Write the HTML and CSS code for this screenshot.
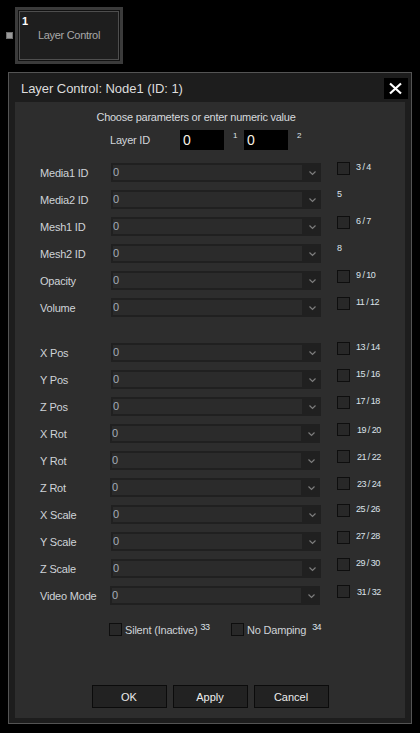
FILE: index.html
```html
<!DOCTYPE html>
<html lang="en">
<head>
<meta charset="utf-8">
<title>Layer Control</title>
<link rel="stylesheet" href="styles.css">
</head>
<body>
<div class="canvas">
  <span class="port"></span>
  <div class="node">
    <div class="node-in">
      <div class="node-id">1</div>
      <div class="node-name">Layer Control</div>
    </div>
  </div>
</div>

<div class="dialog">
  <div class="titlebar">
    <span class="title">Layer Control: Node1 (ID: 1)</span>
    <button class="close" type="button" aria-label="Close">
      <svg width="24" height="21" viewBox="0 0 24 21"><path d="M6 5.5 L17 15.5 M17 5.5 L6 15.5" stroke="#fff" stroke-width="2.2" fill="none"/></svg>
    </button>
  </div>
  <div class="panel">
    <div class="hint">Choose parameters or enter numeric value</div>
    <div class="layer-row">
      <span class="layer-label">Layer ID</span>
      <span class="num-input">0</span><span class="sup">1</span>
      <span class="num-input">0</span><span class="sup">2</span>
    </div>

    <div class="rows">
      <div class="row"><span class="lbl">Media1 ID</span><div class="sel"><span class="val">0</span><span class="btn-dd"><svg width="19" height="19" viewBox="0 0 19 19"><polyline points="7.5,8.5 10.5,11.5 13.5,8.5" fill="none" stroke="#7c7c7c" stroke-width="1.2"/></svg></span></div><span class="cb"></span><span class="idx">3 / 4</span></div>
      <div class="row"><span class="lbl">Media2 ID</span><div class="sel"><span class="val">0</span><span class="btn-dd"><svg width="19" height="19" viewBox="0 0 19 19"><polyline points="7.5,8.5 10.5,11.5 13.5,8.5" fill="none" stroke="#7c7c7c" stroke-width="1.2"/></svg></span></div><span class="idx solo">5</span></div>
      <div class="row"><span class="lbl">Mesh1 ID</span><div class="sel"><span class="val">0</span><span class="btn-dd"><svg width="19" height="19" viewBox="0 0 19 19"><polyline points="7.5,8.5 10.5,11.5 13.5,8.5" fill="none" stroke="#7c7c7c" stroke-width="1.2"/></svg></span></div><span class="cb"></span><span class="idx">6 / 7</span></div>
      <div class="row"><span class="lbl">Mesh2 ID</span><div class="sel"><span class="val">0</span><span class="btn-dd"><svg width="19" height="19" viewBox="0 0 19 19"><polyline points="7.5,8.5 10.5,11.5 13.5,8.5" fill="none" stroke="#7c7c7c" stroke-width="1.2"/></svg></span></div><span class="idx solo">8</span></div>
      <div class="row"><span class="lbl">Opacity</span><div class="sel"><span class="val">0</span><span class="btn-dd"><svg width="19" height="19" viewBox="0 0 19 19"><polyline points="7.5,8.5 10.5,11.5 13.5,8.5" fill="none" stroke="#7c7c7c" stroke-width="1.2"/></svg></span></div><span class="cb"></span><span class="idx">9 / 10</span></div>
      <div class="row"><span class="lbl">Volume</span><div class="sel"><span class="val">0</span><span class="btn-dd"><svg width="19" height="19" viewBox="0 0 19 19"><polyline points="7.5,8.5 10.5,11.5 13.5,8.5" fill="none" stroke="#7c7c7c" stroke-width="1.2"/></svg></span></div><span class="cb"></span><span class="idx">11 / 12</span></div>

      <div class="row group-start"><span class="lbl">X Pos</span><div class="sel"><span class="val">0</span><span class="btn-dd"><svg width="19" height="19" viewBox="0 0 19 19"><polyline points="7.5,8.5 10.5,11.5 13.5,8.5" fill="none" stroke="#7c7c7c" stroke-width="1.2"/></svg></span></div><span class="cb"></span><span class="idx">13 / 14</span></div>
      <div class="row"><span class="lbl">Y Pos</span><div class="sel"><span class="val">0</span><span class="btn-dd"><svg width="19" height="19" viewBox="0 0 19 19"><polyline points="7.5,8.5 10.5,11.5 13.5,8.5" fill="none" stroke="#7c7c7c" stroke-width="1.2"/></svg></span></div><span class="cb"></span><span class="idx">15 / 16</span></div>
      <div class="row"><span class="lbl">Z Pos</span><div class="sel"><span class="val">0</span><span class="btn-dd"><svg width="19" height="19" viewBox="0 0 19 19"><polyline points="7.5,8.5 10.5,11.5 13.5,8.5" fill="none" stroke="#7c7c7c" stroke-width="1.2"/></svg></span></div><span class="cb"></span><span class="idx">17 / 18</span></div>
      <div class="row shift"><span class="lbl">X Rot</span><div class="sel"><span class="val">0</span><span class="btn-dd"><svg width="19" height="19" viewBox="0 0 19 19"><polyline points="7.5,8.5 10.5,11.5 13.5,8.5" fill="none" stroke="#7c7c7c" stroke-width="1.2"/></svg></span></div><span class="cb"></span><span class="idx">19 / 20</span></div>
      <div class="row shift"><span class="lbl">Y Rot</span><div class="sel"><span class="val">0</span><span class="btn-dd"><svg width="19" height="19" viewBox="0 0 19 19"><polyline points="7.5,8.5 10.5,11.5 13.5,8.5" fill="none" stroke="#7c7c7c" stroke-width="1.2"/></svg></span></div><span class="cb"></span><span class="idx">21 / 22</span></div>
      <div class="row shift"><span class="lbl">Z Rot</span><div class="sel"><span class="val">0</span><span class="btn-dd"><svg width="19" height="19" viewBox="0 0 19 19"><polyline points="7.5,8.5 10.5,11.5 13.5,8.5" fill="none" stroke="#7c7c7c" stroke-width="1.2"/></svg></span></div><span class="cb"></span><span class="idx">23 / 24</span></div>
      <div class="row"><span class="lbl">X Scale</span><div class="sel"><span class="val">0</span><span class="btn-dd"><svg width="19" height="19" viewBox="0 0 19 19"><polyline points="7.5,8.5 10.5,11.5 13.5,8.5" fill="none" stroke="#7c7c7c" stroke-width="1.2"/></svg></span></div><span class="cb"></span><span class="idx">25 / 26</span></div>
      <div class="row"><span class="lbl">Y Scale</span><div class="sel"><span class="val">0</span><span class="btn-dd"><svg width="19" height="19" viewBox="0 0 19 19"><polyline points="7.5,8.5 10.5,11.5 13.5,8.5" fill="none" stroke="#7c7c7c" stroke-width="1.2"/></svg></span></div><span class="cb"></span><span class="idx">27 / 28</span></div>
      <div class="row"><span class="lbl">Z Scale</span><div class="sel"><span class="val">0</span><span class="btn-dd"><svg width="19" height="19" viewBox="0 0 19 19"><polyline points="7.5,8.5 10.5,11.5 13.5,8.5" fill="none" stroke="#7c7c7c" stroke-width="1.2"/></svg></span></div><span class="cb"></span><span class="idx">29 / 30</span></div>
      <div class="row shift"><span class="lbl">Video Mode</span><div class="sel"><span class="val">0</span><span class="btn-dd"><svg width="19" height="19" viewBox="0 0 19 19"><polyline points="7.5,8.5 10.5,11.5 13.5,8.5" fill="none" stroke="#7c7c7c" stroke-width="1.2"/></svg></span></div><span class="cb"></span><span class="idx">31 / 32</span></div>
    </div>

    <div class="checks">
      <div class="check-item first"><span class="cb plain"></span><span class="check-text">Silent (Inactive)</span><span class="idx sup-check">33</span></div>
      <div class="check-item"><span class="cb plain"></span><span class="check-text">No Damping</span><span class="idx sup-check wide">34</span></div>
    </div>

    <div class="buttons">
      <button class="btn" type="button">OK</button>
      <button class="btn" type="button">Apply</button>
      <button class="btn" type="button">Cancel</button>
    </div>
  </div>
</div>
</body>
</html>
```

FILE: styles.css
```css
* { box-sizing: border-box; }

html, body {
  margin: 0;
  padding: 0;
  background: #000;
  font-family: "Liberation Sans", Arial, sans-serif;
  color: #d2d6db;
}

/* ---------- node on canvas ---------- */
.canvas {
  display: flex;
  align-items: center;
  gap: 2px;
  padding: 7px 0 0 6px;
}

.port {
  width: 7px;
  height: 7px;
  background: #9a9a9a;
  border: 1px solid #6e6e6e;
}

.node {
  width: 108px;
  height: 57px;
  border: 3px solid #3b3b3b;
  padding: 1px;
  background: #121212;
}

.node-in {
  height: 100%;
  border: 1px solid #4e4e4e;
  background: #1e1e1e;
  padding: 3px 0 0 2px;
}

.node-id {
  font-size: 11px;
  line-height: 12px;
  font-weight: bold;
  color: #fff;
}

.node-name {
  margin-top: 2px;
  font-size: 11px;
  line-height: 13px;
  letter-spacing: -0.3px;
  color: #a9a9a9;
  text-align: center;
  padding-right: 2px;
}

/* ---------- dialog ---------- */
.dialog {
  margin: 8px 0 0 8px;
  width: 404px;
  height: 652px;
  border: 1px solid #545454;
  background: #1d1d1d;
  padding: 0 6px 5px 6px;
}

.titlebar {
  height: 29px;
  display: flex;
  align-items: center;
  justify-content: space-between;
  margin: 0 -3px 0 0;
  padding-left: 6px;
}

.title {
  font-size: 13px;
  color: #dcdcdc;
  letter-spacing: -0.05px;
  margin-top: 1px;
}

.close {
  width: 24px;
  height: 21px;
  margin-top: 1px;
  padding: 0;
  border: 0;
  background: #000;
  display: block;
}
.close svg { display: block; }

.panel {
  background: #2d2d2d;
  padding: 9px 0 10px 0;
  height: 616px;
}

.hint {
  width: 362px;
  text-align: center;
  font-size: 11px;
  line-height: 13px;
  letter-spacing: -0.25px;
  color: #d6d9dd;
}

.layer-row {
  margin-top: 6px;
  height: 20px;
  display: flex;
  align-items: center;
  padding-left: 95px;
}

.layer-label {
  width: 70px;
  font-size: 11px;
  letter-spacing: -0.2px;
}

.num-input {
  width: 44px;
  height: 20px;
  background: #000;
  color: #f6f1e4;
  font-size: 14px;
  line-height: 20px;
  padding-left: 3px;
}

.sup {
  width: 20px;
  align-self: flex-start;
  margin-top: 1px;
  padding-left: 9px;
  font-size: 8px;
  line-height: 9px;
  color: #dde3ea;
}

/* ---------- parameter rows ---------- */
.rows {
  margin-top: 13px;
  display: flex;
  flex-direction: column;
  gap: 8px;
}

.row {
  height: 19px;
  display: flex;
  align-items: center;
  padding-left: 25px;
}

.row.group-start { margin-top: 18px; }

.lbl {
  width: 71px;
  font-size: 11px;
  letter-spacing: -0.2px;
  color: #cfd3d8;
}

.sel {
  width: 210px;
  height: 19px;
  display: flex;
  background: #202020;
}

.val {
  flex: 1;
  margin: 2px 0 2px 2px;
  background: #2b2b2b;
  font-size: 11px;
  line-height: 15px;
  color: #a3abb6;
}

.btn-dd {
  width: 19px;
  height: 19px;
}
.btn-dd svg { display: block; }

.cb {
  width: 13px;
  height: 13px;
  margin-left: 16px;
  align-self: flex-start;
  margin-top: -1px;
  background: #282828;
  border: 1px solid #0e0e0e;
}

.row.shift .sel { margin-left: -1px; }
.row.shift .cb { margin-left: 17px; }
.row.shift .idx { margin-top: 1px; margin-left: 7px; }

.idx {
  margin-left: 6px;
  margin-top: -1px;
  align-self: flex-start;
  font-size: 9px;
  line-height: 10px;
  letter-spacing: -0.55px;
  color: #dbe2ea;
}

.idx.solo { margin-left: 16px; }

/* ---------- bottom checkboxes ---------- */
.checks {
  margin-top: 18px;
  height: 13px;
  display: flex;
  padding-left: 94px;
}

.check-item {
  display: flex;
  align-items: center;
}

.check-item.first { width: 122px; }

.cb.plain {
  margin: 0;
  align-self: center;
}

.check-text {
  margin-left: 3px;
  font-size: 11px;
  letter-spacing: -0.2px;
  color: #cfd3d8;
}

.idx.sup-check {
  margin-left: 3px;
  margin-top: -1px;
}
.idx.sup-check.wide { margin-left: 6px; }

/* ---------- buttons ---------- */
.buttons {
  margin-top: 49px;
  display: flex;
  justify-content: center;
  gap: 6px;
}

.btn {
  width: 75px;
  height: 23px;
  padding: 0;
  background: #222;
  border: 1px solid #0b0b0b;
  color: #ececec;
  font-family: "Liberation Sans", Arial, sans-serif;
  font-size: 11px;
}
```
